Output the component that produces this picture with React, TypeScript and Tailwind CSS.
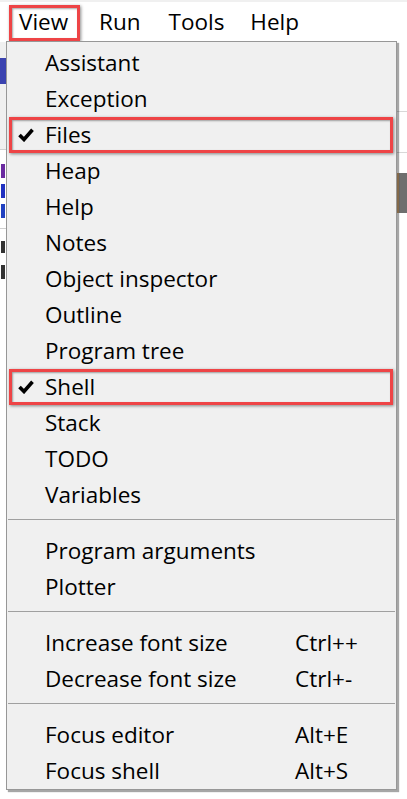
import React from "react";

const font = { fontFamily: '"Open Sans", "Noto Sans", sans-serif' };

function Check() {
  return (
    <svg width="16" height="14" viewBox="0 0 16 14" className="absolute left-[11px] top-[11px]">
      <path d="M1.5 7 L6 11.5 L14.5 1.8" fill="none" stroke="#000" strokeWidth="3.6" strokeLinejoin="miter" strokeLinecap="butt" />
    </svg>
  );
}

type Item = { label: string; checked?: boolean; shortcut?: string; boxed?: boolean };

const redBox =
  "border-[3px] border-[#ee4446] shadow-[1px_1px_3px_rgba(0,0,0,0.45),inset_1px_1px_2px_rgba(0,0,0,0.35)]";

function MenuItem({ item }: { item: Item }) {
  return (
    <div className="relative flex h-[36px] items-center pl-[38px] text-[22.5px] leading-none text-black">
      {item.checked && <Check />}
      <span className="w-[250px] whitespace-nowrap">{item.label}</span>
      {item.shortcut && <span className="whitespace-nowrap">{item.shortcut}</span>}
      {item.boxed && (
        <div className={"pointer-events-none absolute left-[2px] right-[3px] top-0 bottom-0 " + redBox} />
      )}
    </div>
  );
}

function Sep() {
  return (
    <div className="h-[20px] pt-[6px]">
      <div className="mx-[1px] h-[1px] bg-[#a0a0a0]" />
    </div>
  );
}

const group1: Item[] = [
  { label: "Assistant" },
  { label: "Exception" },
  { label: "Files", checked: true, boxed: true },
  { label: "Heap" },
  { label: "Help" },
  { label: "Notes" },
  { label: "Object inspector" },
  { label: "Outline" },
  { label: "Program tree" },
  { label: "Shell", checked: true, boxed: true },
  { label: "Stack" },
  { label: "TODO" },
  { label: "Variables" },
];
const group2: Item[] = [{ label: "Program arguments" }, { label: "Plotter" }];
const group3: Item[] = [
  { label: "Increase font size", shortcut: "Ctrl++" },
  { label: "Decrease font size", shortcut: "Ctrl+-" },
];
const group4: Item[] = [
  { label: "Focus editor", shortcut: "Alt+E" },
  { label: "Focus shell", shortcut: "Alt+S" },
];

export default function App() {
  return (
    <div className="relative h-[799px] w-[407px] overflow-hidden bg-white" style={font}>
      {/* menubar */}
      <div className="flex h-[42px] items-start border-t-[2px] border-[#f0f0f0] bg-white pl-[9px] pt-[3px] text-[22.5px] leading-none text-black">
        <div className={"flex h-[36px] w-[71px] items-center pl-[7px] pb-[1px] " + redBox}>View</div>
        <div className="flex h-[36px] items-center pl-[19px] pb-[1px]">
          <span>Run</span>
          <span className="ml-[28px]">Tools</span>
          <span className="ml-[26px]">Help</span>
        </div>
      </div>

      {/* background window content */}
      <div className="flex h-[757px]">
        <div className="flex w-[7px] flex-col bg-white">
          <div className="h-[16px] bg-[#f0f0f0]" />
          <div className="h-[26px] bg-[#3b43b0]" />
          <div className="h-[66px] bg-[#f0f0f0] border-b border-[#d0d0d0]" />
          <div className="flex flex-col gap-[6px] pt-[14px] pl-[1px]">
            <div className="h-[14px] w-[4px] bg-[#6a2aa0]" />
            <div className="h-[14px] w-[4px] bg-[#2030c0]" />
            <div className="h-[14px] w-[4px] bg-[#2040c0]" />
          </div>
          <div className="mt-[10px] h-[1px] bg-[#d0d0d0]" />
          <div className="flex flex-col gap-[12px] pt-[12px] pl-[1px]">
            <div className="h-[12px] w-[4px] bg-[#333]" />
            <div className="h-[14px] w-[4px] bg-[#333]" />
          </div>
        </div>
        <div className="flex-1" />
        <div className="flex w-[10px] flex-col">
          <div className="h-[70px] bg-white border-b border-[#d8d8d8]" />
          <div className="h-[40px] bg-white" />
          <div className="h-[1px] bg-[#d8d8d8]" />
          <div className="mt-[20px] h-[40px] bg-[#6e6e6e] border-l-[2px] border-[#c8a070]" />
          <div className="flex-1 bg-white" />
        </div>
      </div>

      {/* dropdown menu */}
      <div className="absolute left-[6px] top-[41px] w-[391px] border border-[#979797] bg-[#f0f0f0] pt-[3px] shadow-[2px_2px_1px_rgba(0,0,0,0.35)]">
        {group1.map((it) => (
          <MenuItem key={it.label} item={it} />
        ))}
        <Sep />
        {group2.map((it) => (
          <MenuItem key={it.label} item={it} />
        ))}
        <Sep />
        {group3.map((it) => (
          <MenuItem key={it.label} item={it} />
        ))}
        <Sep />
        {group4.map((it) => (
          <MenuItem key={it.label} item={it} />
        ))}
      </div>
    </div>
  );
}
